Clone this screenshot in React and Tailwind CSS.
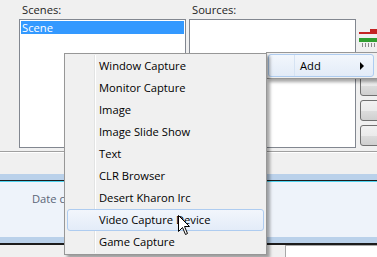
import React from 'react';

const sources = [
  'Window Capture',
  'Monitor Capture',
  'Image',
  'Image Slide Show',
  'Text',
  'CLR Browser',
  'Desert Kharon Irc',
  'Video Capture Device',
  'Game Capture',
];

function Meter() {
  return (
    <div className="flex flex-col w-[18px] pt-[26px]">
      <div className="flex items-end h-[5px]">
        <div className="w-[11px] h-[2px] bg-[#c42323]" />
        <div className="w-[7px] h-[5px] bg-[#c42323]" />
      </div>
      <div className="mt-[4px] h-[4px] bg-[#2f9e2f]" />
      <div className="flex gap-[2px] pl-[3px] mt-[1px]">
        {[0, 1, 2, 3, 4].map(i => (
          <div key={i} className="w-px h-[4px] bg-[#8a8a8a]" />
        ))}
      </div>
    </div>
  );
}

function WinButton() {
  return (
    <div className="w-[30px] h-[21px] rounded-[3px] border border-[#707070] bg-[linear-gradient(#f2f2f2_0%,#ebebeb_50%,#dddddd_51%,#cfcfcf_100%)]" />
  );
}

function Cursor() {
  return (
    <svg className="absolute left-[178px] top-[215px]" width="13" height="21" viewBox="0 0 13 21">
      <path
        d="M0.5 0.5 L0.5 16.5 L4.5 12.5 L7.5 19.5 L9.5 18.5 L6.5 11.5 L11.5 11.5 Z"
        fill="#fff"
        stroke="#000"
        strokeWidth="1"
        strokeLinejoin="miter"
      />
    </svg>
  );
}

export default function App() {
  return (
    <div className="relative w-[377px] h-[257px] overflow-hidden bg-[#f0f0f0] text-[11.2px] text-black font-['Open_Sans','Noto_Sans',sans-serif]">
      {/* top panel */}
      <div className="flex h-[152px] pl-[19px] pt-[3px] border-b border-[#a0a0a0]">
        <div className="flex flex-col shrink-0 w-[167px]">
          <div className="h-[16px] pl-[3px] leading-[14px] text-[#1e1e1e]">Scenes:</div>
          <div className="h-[129px] border border-[#828790] bg-white p-px">
            <div className="h-[13px] pl-[1px] leading-[13px] bg-[#3399ff] text-white">Scene</div>
          </div>
        </div>
        <div className="flex flex-col shrink-0 w-[167px] ml-[3px]">
          <div className="h-[16px] pl-[3px] leading-[14px] text-[#1e1e1e]">Sources:</div>
          <div className="h-[129px] border border-[#828790] bg-white" />
        </div>
        <div className="flex flex-col shrink-0 ml-[3px]">
          <Meter />
          <div className="flex flex-col gap-[4px] mt-[28px] ml-[1px]">
            <WinButton />
            <WinButton />
            <WinButton />
          </div>
        </div>
      </div>
      <div className="h-px bg-white" />

      {/* lower panel */}
      <div className="mt-[21px]">
        <div className="h-[6px] bg-[#bad1ea]" />
        <div className="h-px bg-[#1c1c1c]" />
        <div className="h-px bg-[#4fd2ee]" />
        <div className="h-[55px] bg-[#eef3fa] pl-[32px] pt-[10px] leading-[14px] text-[#5b6577]">Date c</div>
        <div className="h-[6px] bg-[#bad1ea]" />
        <div className="h-[2px] bg-[#1c1c1c]" />
        <div className="flex">
          <div className="w-[285px]" />
          <div className="flex-1 h-[20px] border-l border-t border-[#a8a8a8] bg-white" />
        </div>
      </div>

      {/* parent menu with Add */}
      <div className="absolute left-[266px] top-[52px] w-[112px] h-[27px] border border-[#979797] bg-[#f0f0f0] shadow-[3px_3px_3px_rgba(0,0,0,0.35)]">
        <div className="absolute left-[27px] top-[1px] bottom-[1px] w-px bg-[#e2e3e3]" />
        <div className="absolute left-[28px] top-[1px] bottom-[1px] w-px bg-white" />
        <div className="relative mx-[1px] mt-[1px] h-[23px] w-[106px] rounded-[3px] border border-[#aeccf0] bg-[linear-gradient(#f2f6fc,#e3ecf8)] flex items-center">
          <div className="absolute left-[25px] top-0 bottom-0 w-px bg-[#d6e3f3]" />
          <span className="pl-[31px] leading-[14px]">Add</span>
          <div className="ml-auto mr-[9px] w-0 h-0 border-y-[4px] border-y-transparent border-l-[4px] border-l-black" />
        </div>
      </div>

      {/* submenu */}
      <div className="absolute left-[64px] top-[53px] w-[203px] border border-[#979797] bg-[#f0f0f0] py-px shadow-[3px_3px_3px_rgba(0,0,0,0.35)]">
        <div className="absolute left-[29px] top-px bottom-px w-px bg-[#e2e3e3]" />
        <div className="absolute left-[30px] top-px bottom-px w-px bg-white" />
        {sources.map(name => (
          <div key={name} className="relative h-[22px] px-[2px]">
            {name === 'Video Capture Device' ? (
              <div className="h-[22px] rounded-[3px] border border-[#aeccf0] bg-[linear-gradient(#f2f6fc,#e3ecf8)] flex items-center pl-[31px] leading-[14px]">
                {name}
              </div>
            ) : (
              <div className="h-[22px] flex items-center pl-[32px] leading-[14px]">{name}</div>
            )}
          </div>
        ))}
      </div>

      <Cursor />
    </div>
  );
}
